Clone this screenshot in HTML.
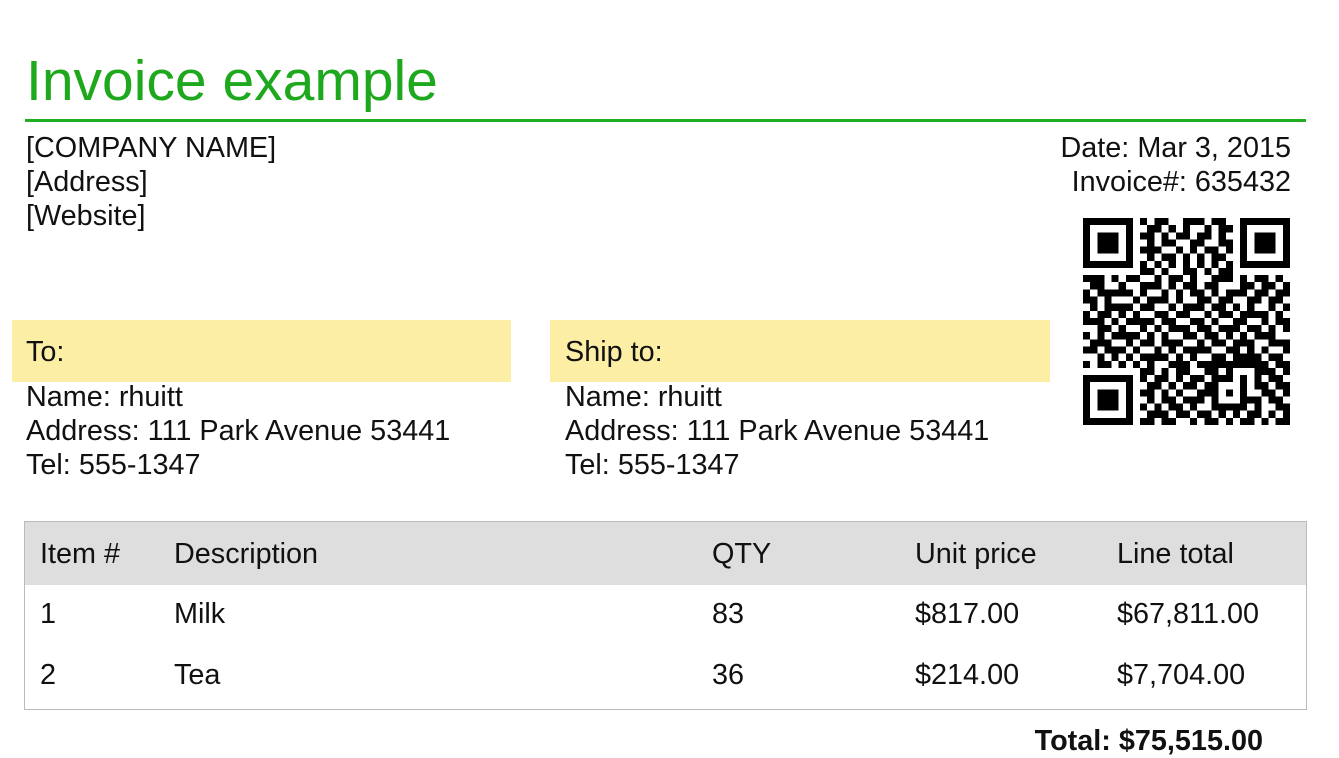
<!DOCTYPE html>
<html><head><meta charset="utf-8"><style>
body{margin:0;width:1339px;height:754px;background:#fff;position:relative;overflow:hidden;font-family:"Liberation Sans",Arial,sans-serif;color:#111}
.a{position:absolute;font-size:28.8px;line-height:34px;white-space:nowrap}
.y{position:absolute;background:#fdeea6}
</style></head><body>
<div class="a" style="left:26px;top:48px;font-size:57px;line-height:66px;color:#1ea81e">Invoice example</div>
<div style="position:absolute;left:25px;top:119px;width:1281px;height:3px;background:#22b022"></div>
<div class="a" style="left:26px;top:131px">[COMPANY NAME]<br>[Address]<br>[Website]</div>
<div class="a" style="right:48px;top:131px;text-align:right">Date: Mar 3, 2015<br>Invoice#: 635432</div>
<div class="y" style="left:12px;top:320px;width:499px;height:62px"></div>
<div class="y" style="left:550px;top:320px;width:500px;height:62px"></div>
<div class="a" style="left:26px;top:335px">To:</div>
<div class="a" style="left:565px;top:335px">Ship to:</div>
<div class="a" style="left:26px;top:380px">Name: rhuitt<br>Address: 111 Park Avenue 53441<br>Tel: 555-1347</div>
<div class="a" style="left:565px;top:380px">Name: rhuitt<br>Address: 111 Park Avenue 53441<br>Tel: 555-1347</div>
<div style="position:absolute;left:24px;top:521px;width:1281px;height:187px;border:1px solid #bbb"></div>
<div style="position:absolute;left:25px;top:522px;width:1281px;height:63px;background:#dedede"></div>
<div class="a" style="left:40px;top:537px">Item #</div>
<div class="a" style="left:174px;top:537px">Description</div>
<div class="a" style="left:712px;top:537px">QTY</div>
<div class="a" style="left:915px;top:537px">Unit price</div>
<div class="a" style="left:1117px;top:537px">Line total</div>
<div class="a" style="left:40px;top:597px">1</div>
<div class="a" style="left:174px;top:597px">Milk</div>
<div class="a" style="left:712px;top:597px">83</div>
<div class="a" style="left:915px;top:597px">$817.00</div>
<div class="a" style="left:1117px;top:597px">$67,811.00</div>
<div class="a" style="left:40px;top:658px">2</div>
<div class="a" style="left:174px;top:658px">Tea</div>
<div class="a" style="left:712px;top:658px">36</div>
<div class="a" style="left:915px;top:658px">$214.00</div>
<div class="a" style="left:1117px;top:658px">$7,704.00</div>
<div class="a" style="right:76px;top:724px;font-weight:bold">Total: $75,515.00</div>
<svg id="qr" style="position:absolute;left:1083px;top:218px" width="207" height="207" viewBox="0 0 29 29" shape-rendering="crispEdges"></svg>
<script>
var R=["11111110101100111011001111111","10000010011010100101101000001","10111010110101101101001011101","10111010010110011001101011101","10111010111001010110101011101","10000010010110101011001000001","11111110101010101010101111111","00000000110100110101100000000",
"11101011001011010011101011010","01100100111010110110001101101","10111110100101011010111011011","11010001011101001101100110110","01011110110010111011010100101","10110101001101100101101111010","11101011110110011010011001011","00110100101011101101110110101","10101111010100110110101011100","01110010110111001011011100111","11011101001010111100110101001","00101010111101010011011110110","10110101010011101111111111011","00000000110101100110100011101",
"11111110101101011011101010110","10000010011010110110001011011","10111010110101001110101001101","10111010010110111010001110110","10111010101011010011111010011","10000010011101101101010110101","11111110110110010110101101011"];
var s="";for(var y=0;y<29;y++)for(var x=0;x<29;x++)if(R[y][x]=="1")s+='<rect x="'+x+'" y="'+y+'" width="1" height="1"/>';
document.getElementById("qr").innerHTML=s;
</script>
</body></html>
